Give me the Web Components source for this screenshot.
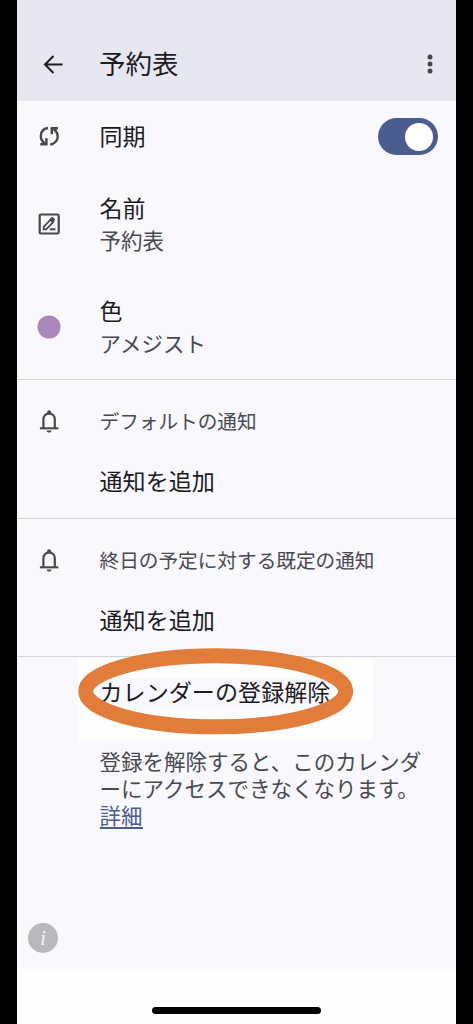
<!DOCTYPE html>
<html lang="ja">
<head>
<meta charset="utf-8">
<meta name="viewport" content="width=device-width">
<title>予約表</title>
<style>
html,body{margin:0;height:100%;background:#000}
body{font-family:"Noto Sans CJK JP",sans-serif;color:#1b1b21;overflow:hidden}
</style>
</head>
<body>
<calendar-screen>
  <app-header>予約表</app-header>
  <setting-row style="--h:71px"><row-icon slot="icon" name="sync"></row-icon>同期<toggle-switch slot="end"></toggle-switch></setting-row>
  <setting-row style="--h:104px"><row-icon slot="icon" name="edit"></row-icon>名前<span slot="sub">予約表</span></setting-row>
  <setting-row style="--h:103px"><row-icon slot="icon" name="dot"></row-icon>色<span slot="sub">アメジスト</span></setting-row>
  <notice-group heading="デフォルトの通知">通知を追加</notice-group>
  <notice-group heading="終日の予定に対する既定の通知" style="--h:138px">通知を追加</notice-group>
  <unsubscribe-block>カレンダーの登録解除<span slot="note">登録を解除すると、このカレンダ</span><span slot="note2">ーにアクセスできなくなります。</span><span slot="link">詳細</span></unsubscribe-block>
  <info-badge slot="bottom"></info-badge>
</calendar-screen>
<script>
const define = (name, html) => customElements.define(name, class extends HTMLElement {
  constructor() {
    super();
    const t = document.createElement('template');
    t.innerHTML = typeof html === 'function' ? html(this) : html;
    this.attachShadow({mode: 'open'}).append(t.content.cloneNode(true));
  }
});

define('calendar-screen', `<style>
:host{display:flex;flex-direction:column;height:1024px;width:439px;margin-left:17px;background:#fefefe}
main{height:969px;background:#f9f8fe;display:flex;flex-direction:column}
.space{flex:1}
footer{flex:1;display:flex;justify-content:center;align-items:flex-end;padding-bottom:10px}
i{width:169px;height:7px;border-radius:4px;background:#000}
</style><main><slot></slot><div class="space"></div><slot name="bottom"></slot></main><footer><i></i></footer>`);

define('app-header', `<style>
:host{display:flex;height:101px;box-sizing:border-box;padding:27px 16px 0 26px;background:#e7e7f2;align-items:center;font-size:26.5px;line-height:38px}
svg{flex:none}
.t{flex:1;margin-left:35px;padding-bottom:2px}
</style><svg width="21" height="21" viewBox="0 0 21 21" fill="none" stroke="#1d1d24" stroke-width="2.1"><path d="M19.600 10.500H2.500M10.500 2L2 10.500l8.500 8.500"/></svg>
<span class="t"><slot></slot></span>
<svg width="20" height="22" viewBox="0 0 20 22" fill="#45454d"><circle cx="10" cy="4" r="2.500"/><circle cx="10" cy="11" r="2.500"/><circle cx="10" cy="18" r="2.500"/></svg>`);

define('setting-row', `<style>
:host{display:grid;grid-template-columns:82.500px 1fr auto;height:var(--h);align-items:center;font-size:23px;line-height:34px}
.i{display:flex;justify-content:center;padding:0 19px 1px 0}
.x{display:flex;flex-direction:column;padding-bottom:3px}
.s{font-size:21.5px;line-height:32px;color:#49494f}
.e{padding-right:18px}
</style><div class="i"><slot name="icon"></slot></div><div class="x"><div><slot></slot></div><div class="s"><slot name="sub"></slot></div></div><div class="e"><slot name="end"></slot></div>`);

define('toggle-switch', `<style>
:host{display:flex;justify-content:flex-end;align-items:center;width:60px;height:37px;box-sizing:border-box;padding-right:5px;border-radius:19px;background:#4b5d90}
i{width:28px;height:28px;border-radius:50%;background:#fff}
</style><i></i>`);

const glyphs = {
  sync: '<g fill="none" stroke="#47474d" stroke-width="2.400"><path d="M11 4C6.500 4.800 3.800 8 3.800 12c0 3.200 1.500 5.800 4.200 7.800M3.200 20.300h6.200V14.300M13.200 20.600c4.600-.8 7.500-4 7.500-8 0-3.200-1.500-5.700-4-7.600M21 4.300h-6.200v6"/></g>',
  edit: '<rect x="2.700" y="2.500" width="19" height="19" rx="1.300" fill="none" stroke="#47474d" stroke-width="2.200"/><path d="M6.700 17.300v-2.500l7-7.300 2.500 2.500-7 7.300z" fill="none" stroke="#47474d" stroke-width="1.800"/><path d="M12.200 7.700l2.300-2.400q.8-.6 1.500 0l1.700 1.700q.6.800 0 1.500l-2.300 2.400z" fill="#47474d"/><path d="M12.800 17.300h5.600" stroke="#47474d" stroke-width="2"/>',
  dot: '<circle cx="12" cy="12" r="11.500" fill="#aa87bb"/>',
  bell: '<path d="M6.400 19V10.600c0-3.600 2.200-6 5.700-6s5.700 2.400 5.700 6V19" fill="none" stroke="#47474d" stroke-width="2.200"/><path d="M2.900 19.300h18.400" stroke="#47474d" stroke-width="2.100"/><circle cx="12.100" cy="3.200" r="2" fill="#47474d"/><path d="M9.700 21.500h4.800c0 1.300-1 2.100-2.400 2.100s-2.400-.8-2.400-2.100z" fill="#47474d"/>'
};
define('row-icon', el => `<style>:host{display:block;width:24px;height:24px}svg{display:block;overflow:visible}</style><svg width="24" height="24" viewBox="0 0 24 24">${glyphs[el.getAttribute('name')]}</svg>`);

define('notice-group', el => `<style>
:host{display:grid;grid-template-columns:82.500px 1fr;grid-template-rows:29px 34px;align-items:center;align-content:start;height:var(--h,139px);box-sizing:border-box;padding-top:26px;border-top:1px solid #d4d3dc;row-gap:28px}
.i{display:flex;justify-content:center;padding-right:19px}
.h{font-size:19.65px;line-height:29px;color:#49494f}
.a{grid-column:2;font-size:23.1px;line-height:34px}
</style><div class="i"><row-icon name="bell"></row-icon></div><div class="h">${el.getAttribute('heading')}</div><div class="a"><slot></slot></div>`);

define('unsubscribe-block', `<style>
:host{display:block;position:relative;border-top:1px solid #d4d3dc;padding:1px 0 0 61px}
.box{width:294px;height:83px;background:#fefefe;box-sizing:border-box;padding:20px 0 0 21.500px}
.label{background:#f9f8fe;width:231px;height:33px;font-size:23.1px;line-height:27px;white-space:nowrap}
svg{position:absolute;left:61px;top:-9px}
.n{padding:6px 0 0 21.500px;font-size:21.500px;line-height:27px;color:#49494f;white-space:nowrap}
.l{display:inline-block;color:#4b5d90;height:26px;border-bottom:2px solid #4b5d90}
</style><div class="box"><div class="label"><slot></slot></div></div>
<svg width="276" height="87" viewBox="0 0 276 87"><ellipse cx="137.700" cy="43.300" rx="130" ry="35.500" fill="none" stroke="#e27c3a" stroke-width="15"/></svg>
<div class="n"><div><slot name="note"></slot></div><div><slot name="note2"></slot></div><div class="l"><slot name="link"></slot></div></div>`);

define('info-badge', `<style>
:host{display:flex;width:30px;height:30px;margin:0 0 16px 11px;border-radius:50%;background:#b9b9bd;color:#f7f7fa;align-items:center;justify-content:center;font:italic 20px/30px "Liberation Serif",serif}
</style><span>i</span>`);
</script>
</body>
</html>
